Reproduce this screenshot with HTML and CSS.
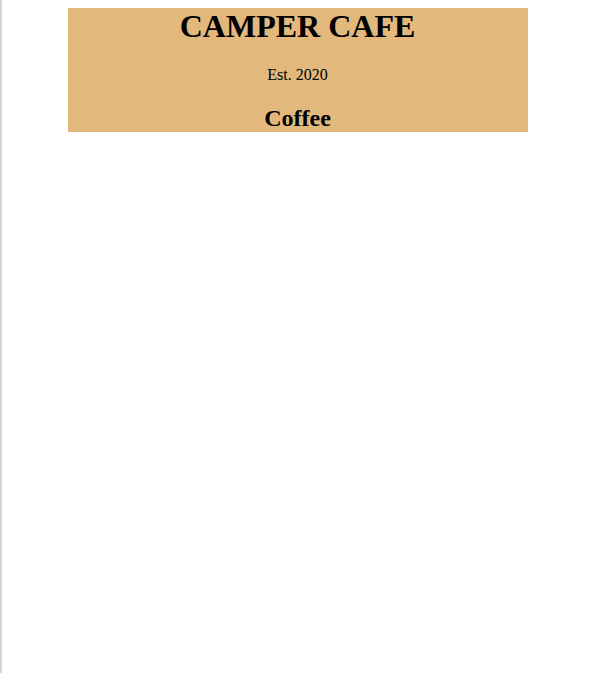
FILE: index.html
```html
<!DOCTYPE html>
<html lang="en">
<head>
<meta charset="utf-8">
<title>Camper Cafe Menu</title>
<link rel="stylesheet" href="styles.css">
</head>
<body>
<div class="menu">
  <header>
    <h1 class="title">CAMPER CAFE</h1>
    <p class="est">Est. 2020</p>
  </header>
  <main>
    <section>
      <h2 class="section-title">Coffee</h2>
    </section>
  </main>
</div>
</body>
</html>
```
FILE: styles.css
```css
html {
  border-left: 2px solid #d6d6da;
  min-height: 100%;
  box-sizing: border-box;
}
body {
  margin: 8px;
  font-family: "Liberation Serif", "Times New Roman", serif;
  color: #000;
}
.menu {
  width: 80%;
  margin-left: auto;
  margin-right: auto;
  background-color: #e2b87c;
}
.title {
  font-size: 32px;
  line-height: 37px;
  margin: 0 0 21.44px;
  text-align: center;
}
.est {
  font-size: 16px;
  line-height: 18px;
  margin: 16px 0;
  text-align: center;
}
.section-title {
  font-size: 24px;
  line-height: 28px;
  margin: 19.92px 0;
  text-align: center;
}
```
